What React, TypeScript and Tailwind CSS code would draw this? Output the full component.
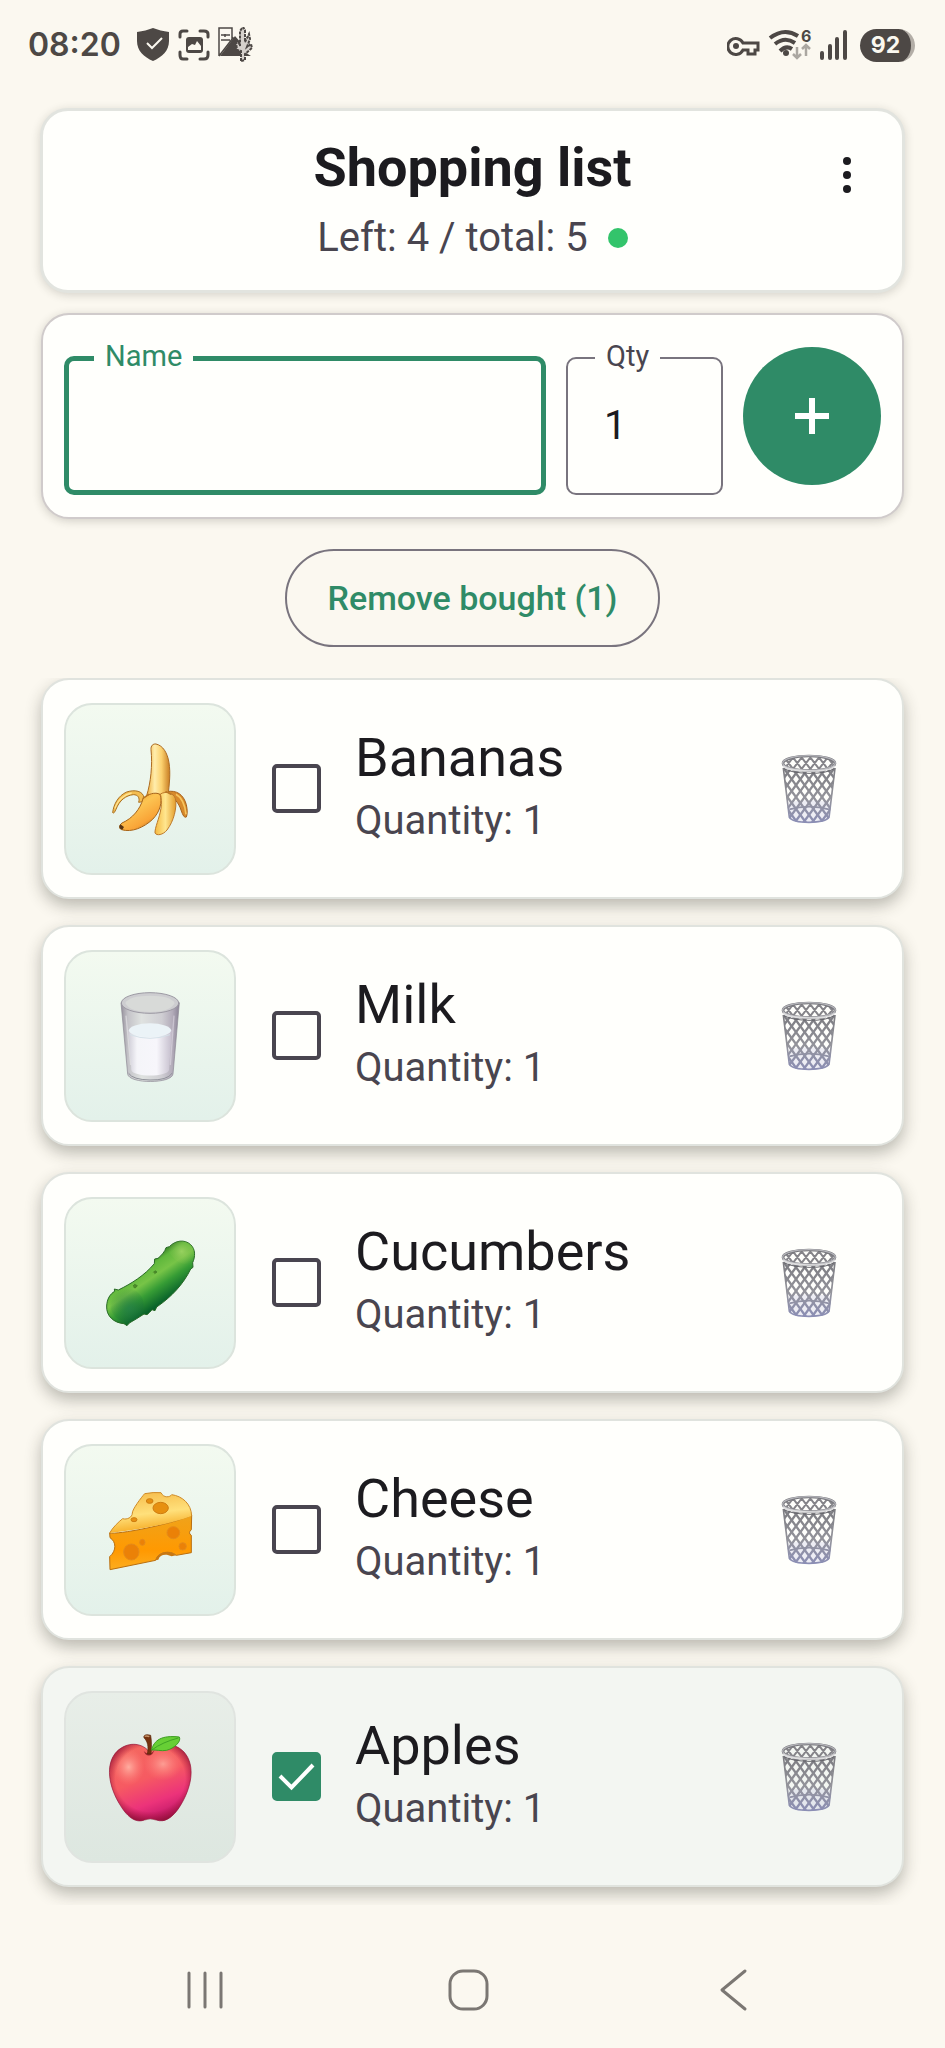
import { useId, useState } from "react";
import type { ReactNode } from "react";

type Item = { id: string; name: string; quantity: number; bought: boolean; icon: ReactNode };

function Banana() {
  return (
    <svg viewBox="242 294 300 300" className="size-[100px]" aria-hidden="true">
      <defs>
        <linearGradient id="bananaTop" x1="0" x2="1">
          <stop offset="0" stopColor="#f0ae3c" />
          <stop offset=".35" stopColor="#ffedac" />
          <stop offset=".65" stopColor="#fbd06d" />
          <stop offset="1" stopColor="#c87d23" />
        </linearGradient>
        <linearGradient id="bananaLeft" x1="0" y1="0" x2=".7" y2="1">
          <stop offset="0" stopColor="#e49427" />
          <stop offset=".45" stopColor="#fcc452" />
          <stop offset=".8" stopColor="#f9a437" />
          <stop offset="1" stopColor="#b76d1c" />
        </linearGradient>
        <linearGradient id="bananaRight" x1="0" x2="1">
          <stop offset="0" stopColor="#f5b93f" />
          <stop offset=".5" stopColor="#ffe68f" />
          <stop offset="1" stopColor="#e39c2b" />
        </linearGradient>
      </defs>
      <path d="M442 452C472 446 493 461 501 491C505 508 504 521 501 528C495 531 491 524 485 507C478 485 464 470 450 466Z" fill="#d7892a" stroke="#a8621a" strokeWidth="3" />
      <path d="M470 460C488 470 497 494 500 520" stroke="#f8c55f" strokeWidth="5" fill="none" />
      <path d="M382 464C394 425 400 373 395 326C394 314 401 308 410 309C431 314 444 335 449 365C454 397 450 430 446 464Z" fill="url(#bananaTop)" stroke="#ad6c22" strokeWidth="3" />
      <path d="M374 470C371 450 347 445 322 453C297 464 283 489 280 515C282 519 286 514 290 505C300 478 320 463 342 461C356 461 362 470 358 484L371 482Z" fill="#f4bd51" stroke="#a97123" strokeWidth="3" />
      <path d="M287 502C295 476 316 460 337 456" fill="none" stroke="#ffe493" strokeWidth="4" />
      <path d="M371 473C386 459 407 452 422 460C430 483 422 512 400 535C373 560 337 575 307 566C298 563 299 553 308 546C340 532 363 504 371 473Z" fill="url(#bananaLeft)" stroke="#a66318" strokeWidth="3" />
      <path d="M423 459C441 449 462 456 468 472C474 500 463 541 443 567C431 582 412 585 407 576C406 560 420 533 425 502C427 486 427 471 423 459Z" fill="url(#bananaRight)" stroke="#bd792a" strokeWidth="3" />
      <path d="M303 550l11 8-5 8c-9-1-11-9-6-16Z" fill="#593513" />
      <path d="M371 472l17-12M440 452l15 8" stroke="#b97623" strokeWidth="4" strokeLinecap="round" />
    </svg>
  );
}

function Milk() {
  return (
    <svg viewBox="242 256 300 300" className="size-[100px]" aria-hidden="true">
      <defs>
        <linearGradient id="glass" x1="0" x2="1">
          <stop offset="0" stopColor="#96919c" />
          <stop offset=".12" stopColor="#c4c3c8" />
          <stop offset=".35" stopColor="#dfe2e0" />
          <stop offset=".7" stopColor="#cfced3" />
          <stop offset=".88" stopColor="#b3acba" />
          <stop offset="1" stopColor="#8b8496" />
        </linearGradient>
        <linearGradient id="milkFill" x1="0" x2="1">
          <stop offset="0" stopColor="#d0ced8" />
          <stop offset=".2" stopColor="#f5f5f9" />
          <stop offset=".65" stopColor="#f7f6fb" />
          <stop offset="1" stopColor="#c4bdcc" />
        </linearGradient>
      </defs>
      <path d="M305 306L325 520C328 550 458 550 461 520L480 306Z" fill="url(#glass)" stroke="#8b8793" strokeWidth="2" />
      <path d="M327 388C345 377 440 377 458 388L449 508C445 530 340 530 336 508Z" fill="url(#milkFill)" />
      <ellipse cx="392" cy="389" rx="63" ry="21" fill="#ebf3f7" />
      <path d="M332 402Q392 424 452 402" fill="none" stroke="#d5e2e9" strokeWidth="3" />
      <ellipse cx="392" cy="307" rx="86" ry="31" fill="#cdcdd0" stroke="#9c99a3" strokeWidth="3" />
      <path d="M318 307Q330 285 392 285T466 307Q453 334 392 334T318 307Z" fill="#d8dad8" />
      <path d="M328 518Q340 537 392 538T458 518" fill="none" stroke="#8f9199" strokeWidth="3" />
      <path d="M320 345L334 493" stroke="#e8e7ea" strokeWidth="4" opacity=".6" />
      <path d="M464 345L453 493" stroke="#e6e1eb" strokeWidth="4" opacity=".5" />
    </svg>
  );
}

function Cucumber() {
  return (
    <svg viewBox="242 249 300 300" className="size-[100px]" aria-hidden="true">
      <defs>
        <linearGradient id="cucumberBody" gradientUnits="userSpaceOnUse" x1="345" y1="355" x2="420" y2="465">
          <stop offset="0" stopColor="#377d26" />
          <stop offset=".16" stopColor="#60b83c" />
          <stop offset=".4" stopColor="#77c447" />
          <stop offset=".65" stopColor="#369c35" />
          <stop offset="1" stopColor="#07602a" />
        </linearGradient>
        <radialGradient id="cucumberTip" gradientUnits="userSpaceOnUse" cx="487" cy="304" r="42">
          <stop offset="0" stopColor="#a0d565" stopOpacity=".85" />
          <stop offset="1" stopColor="#82be4d" stopOpacity="0" />
        </radialGradient>
        <radialGradient id="cucumberBase" gradientUnits="userSpaceOnUse" cx="330" cy="475" r="62">
          <stop offset="0" stopColor="#227b4b" stopOpacity=".7" />
          <stop offset="1" stopColor="#126438" stopOpacity="0" />
        </radialGradient>
      </defs>
      <path d="M440 293L450 290C468 271 496 267 514 284C529 298 528 320 520 338L521 352L514 357C492 403 456 441 412 471L407 482L398 479L391 487L383 494L374 492C359 502 344 511 330 519L323 527L314 521C284 519 260 498 262 468C263 447 272 432 286 424L285 417L297 420C336 401 376 376 405 341L406 327L416 325C428 315 437 304 440 293Z" fill="url(#cucumberBody)" stroke="#286a26" strokeWidth="3" strokeLinejoin="round" />
      <path d="M440 293L450 290C468 271 496 267 514 284C529 298 528 320 520 338C496 350 468 340 440 293Z" fill="url(#cucumberTip)" />
      <circle cx="323" cy="465" r="50" fill="url(#cucumberBase)" />
      <path d="M341 408l5-5 8 4-6 7-5-2M402 367l5-5 6 4-7 5" fill="#4e8b29" stroke="#397823" strokeWidth="2" />
    </svg>
  );
}

function Cheese() {
  return (
    <svg viewBox="242 240 300 300" className="size-[100px]" aria-hidden="true">
      <defs>
        <linearGradient id="cheeseTop" x1="0" y1="0" x2=".25" y2="1">
          <stop offset="0" stopColor="#f5b744" />
          <stop offset=".6" stopColor="#ffe07b" />
          <stop offset="1" stopColor="#f6ac24" />
        </linearGradient>
        <linearGradient id="cheeseSide" x1="0" y1="0" x2="0" y2="1">
          <stop offset="0" stopColor="#efa31b" />
          <stop offset=".65" stopColor="#ff9901" />
          <stop offset="1" stopColor="#fcad20" />
        </linearGradient>
      </defs>
      <path d="M271 399C295 404 448 375 517 346L516 389Q505 399 516 406L516 458L471 466C451 449 415 456 409 481L272 509L271 470C292 452 291 425 272 413Z" fill="url(#cheeseSide)" stroke="#b96f10" strokeWidth="3" strokeLinejoin="round" />
      <path d="M271 399C279 384 297 366 310 356C323 360 339 352 339 339C339 328 366 292 376 281Q402 276 425 278C433 295 452 292 457 284C488 288 516 311 517 348C447 374 355 389 271 399Z" fill="url(#cheeseTop)" />
      <path d="M271 399C279 384 297 366 310 356C323 360 339 352 339 339C339 328 366 292 376 281Q402 276 425 278C433 295 452 292 457 284C488 288 516 311 517 348" fill="none" stroke="#cf8a26" strokeWidth="3" strokeLinejoin="round" />
      <g fill="#e79010" stroke="#cf7d10" strokeWidth="3">
        <ellipse cx="424" cy="324" rx="23" ry="17" />
        <ellipse cx="391" cy="303" rx="10" ry="7" />
        <ellipse cx="344" cy="359" rx="9" ry="6" />
      </g>
      <g fill="#eb8107" stroke="#e58b1a" strokeWidth="3">
        <ellipse cx="336" cy="456" rx="23" ry="24" />
        <ellipse cx="462" cy="398" rx="19" ry="18" />
        <ellipse cx="490" cy="439" rx="11" ry="11" />
        <ellipse cx="369" cy="427" rx="8" ry="9" />
      </g>
      <path d="M408 481C415 454 451 448 471 466L457 469C439 460 421 464 417 479Z" fill="#c87711" />
    </svg>
  );
}

function Apple() {
  return (
    <svg viewBox="242 234 300 300" className="size-[100px]" aria-hidden="true">
      <defs>
        <linearGradient id="appleSkin" x1=".25" y1="0" x2=".65" y2="1">
          <stop offset="0" stopColor="#f4695f" />
          <stop offset=".45" stopColor="#f65a62" />
          <stop offset=".75" stopColor="#ec337a" />
          <stop offset="1" stopColor="#bb1467" />
        </linearGradient>
        <radialGradient id="appleShine">
          <stop offset="0" stopColor="#ffada0" />
          <stop offset="1" stopColor="#ff8078" stopOpacity="0" />
        </radialGradient>
        <radialGradient id="appleShade" cx=".5" cy=".45" r=".56">
          <stop offset=".76" stopColor="#a8123b" stopOpacity="0" />
          <stop offset="1" stopColor="#8f1036" stopOpacity=".85" />
        </radialGradient>
      </defs>
      <path d="M388 306C365 280 323 278 293 307C256 345 268 414 303 469C327 509 352 522 375 513Q392 506 411 513C436 522 461 506 483 470C515 418 531 351 494 309C464 278 420 281 388 306Z" fill="url(#appleSkin)" />
      <ellipse cx="328" cy="354" rx="48" ry="55" fill="url(#appleShine)" />
      <ellipse cx="431" cy="345" rx="58" ry="50" fill="url(#appleShine)" opacity=".8" />
      <path d="M388 306C365 280 323 278 293 307C256 345 268 414 303 469C327 509 352 522 375 513Q392 506 411 513C436 522 461 506 483 470C515 418 531 351 494 309C464 278 420 281 388 306Z" fill="url(#appleShade)" stroke="#941b3d" strokeWidth="2" />
      <path d="M373 306Q389 323 406 304L399 315Q388 324 378 315Z" fill="#98252d" />
      <path d="M384 315C388 293 386 279 374 266C371 259 380 254 394 259C397 276 397 297 395 315Z" fill="#75320f" stroke="#592609" strokeWidth="2" />
      <path d="M376 260Q382 257 391 261L389 265Q382 262 376 264Z" fill="#c7956b" />
      <path d="M396 303C405 274 425 258 480 264C487 278 464 298 442 304C425 307 411 302 396 303Z" fill="#67cf35" stroke="#3c9d21" strokeWidth="3" />
      <path d="M397 303Q430 279 477 267" fill="none" stroke="#369b20" strokeWidth="2.5" />
    </svg>
  );
}

function Basket() {
  const id = useId();
  return (
    <svg viewBox="223 265 210 240" className="h-[80px] w-[70px]" aria-hidden="true">
      <defs>
        <linearGradient id={`${id}s`} gradientUnits="userSpaceOnUse" x1="0" y1="320" x2="0" y2="488">
          <stop offset="0" stopColor="#7b7b80" />
          <stop offset=".55" stopColor="#94949b" />
          <stop offset="1" stopColor="#8b8eb5" />
        </linearGradient>
        <clipPath id={`${id}b`}>
          <path d="M250 322Q328 342 407 322L389 470Q380 486 328 486T268 470Z" />
        </clipPath>
        <clipPath id={`${id}r`}>
          <ellipse cx="328" cy="307" rx="74" ry="20" />
        </clipPath>
      </defs>
      <path d="M268 425Q328 412 391 425L388 470Q370 486 328 486T269 470Z" fill="#c3c5e2" opacity=".3" />
      <g clipPath={`url(#${id}b)`} fill="none" stroke={`url(#${id}s)`} strokeWidth="7">
        <path d="M146 320L270 490M172 320L296 490M198 320L322 490M224 320L348 490M250 320L374 490M276 320L400 490M302 320L426 490M328 320L452 490M354 320L478 490M380 320L504 490" />
        <path d="M276 320L152 490M302 320L178 490M328 320L204 490M354 320L230 490M380 320L256 490M406 320L282 490M432 320L308 490M458 320L334 490M484 320L360 490M510 320L386 490" />
        <path d="M269 446Q328 430 388 446" strokeWidth="5" />
      </g>
      <path d="M251 322L269 470Q278 485 328 485T388 470L406 322" fill="none" stroke={`url(#${id}s)`} strokeWidth="5" />
      <g clipPath={`url(#${id}r)`} stroke="#858489" strokeWidth="6" fill="none">
        <path d="M250 285l34 45M276 285l34 45M302 285l34 45M328 285l34 45M354 285l34 45M380 285l34 45M284 285l-34 45M310 285l-34 45M336 285l-34 45M362 285l-34 45M388 285l-34 45M414 285l-34 45" />
      </g>
      <ellipse cx="328" cy="308" rx="78" ry="22" fill="none" stroke="#77777c" strokeWidth="8" />
      <ellipse cx="328" cy="307" rx="79" ry="22" fill="none" stroke="#b5b5ba" strokeWidth="4" />
      <path d="M250 316Q266 330 328 331T406 316" fill="none" stroke="#dededf" strokeWidth="5" />
      <path d="M253 324Q276 337 328 338T403 324" fill="none" stroke="#65656b" strokeWidth="3" />
    </svg>
  );
}

function StatusBar() {
  return (
    <div className="flex h-[90px] items-center justify-between pr-[30px] pl-[28px] text-[#4d4845]">
      <div className="flex items-center">
        <time className="w-[108px] font-[Inter,sans-serif] text-[32px] leading-[40px] font-semibold">08:20</time>
        <svg viewBox="0 0 118 36" className="h-[36px] w-[118px]" aria-hidden="true">
          <path d="M17 1C22 3 27 4 33 5V14C33 24 26 30 17 34C8 30 1 24 1 14V5C7 4 12 3 17 1Z" fill="currentColor" />
          <path d="M11 16l5 5 10-10" fill="none" stroke="#fbf8f0" strokeWidth="2" />
          <g fill="none" stroke="currentColor" strokeWidth="3" strokeLinecap="round">
            <path d="M44 10V7q0-3 3-3h4M64 4h4q4 0 4 3v3M44 25v3q0 4 3 4h4M64 32h4q4 0 4-4v-3" />
          </g>
          <rect x="50" y="10" width="17" height="16" rx="3" fill="currentColor" />
          <path d="M52 23V20l4-3 3 1 2-4 4 5v4Z" fill="#fbf8f0" />
          <path d="M83 29V1h13v11M85 8h9M85 13h9M89 7v3M83 29l14-18 5 5" fill="none" stroke="currentColor" strokeWidth="1.5" />
          <path d="M84 29L99 9l8 9v6l8 5Z" fill="currentColor" />
          <path d="M105 34V24l-4-1-1-8 3 1 1 3V4l3-4 2 3v12l4-8 1 5-3 8 4-3 1 4-7 6v6Z" fill="#d6d1cc" stroke="currentColor" strokeWidth="2" strokeDasharray="3 1" />
        </svg>
      </div>
      <div className="flex items-center">
        <svg viewBox="0 0 122 36" className="h-[36px] w-[122px]" aria-hidden="true">
          <path d="M16 16h15v7h-3v4h-7v-4h-5a8 8 0 1 1 0-7Z" fill="none" stroke="currentColor" strokeWidth="3" />
          <circle cx="9" cy="19" r="3" fill="currentColor" />
          <g fill="none" stroke="currentColor" strokeWidth="4">
            <path d="M43 11Q57 0 71 9M48 17Q58 9 68 16M53 24Q59 18 65 22" />
          </g>
          <circle cx="59" cy="26" r="3" fill="currentColor" />
          <path d="M70 20v11M66 27l4 4 4-4M79 29V18M75 22l4-4 4 4" fill="none" stroke="#aba7a1" strokeWidth="2.5" />
          <path d="M95 26v5M103 19v12M110 12v19M118 5v26" fill="none" stroke="currentColor" strokeWidth="4" strokeLinecap="round" />
          <text x="74" y="15" fontFamily="Inter" fontSize="16" fontWeight="700" fill="currentColor">6</text>
        </svg>
        <span className="ml-[11px] flex h-[33px] w-[55px] items-center justify-center overflow-hidden rounded-full border-r-4 border-[#b3aea7] bg-[#4d4845] font-[Inter,sans-serif] text-[23px] leading-[33px] font-bold text-[#fbf8f0]">
          92
        </span>
      </div>
    </div>
  );
}

function Row({ item, onToggle, onDelete }: { item: Item; onToggle: () => void; onDelete: () => void }) {
  return (
    <li
      className={`flex h-[221px] items-center rounded-[28px] border-2 border-[#e0e3de] pl-[21px] shadow-[0_7px_16px_rgba(40,40,30,0.3)] ${item.bought ? "bg-[#f3f6f2]" : "bg-[#fffffc]"}`}
    >
      <div
        className={`grid size-[172px] shrink-0 place-items-center rounded-[28px] border-2 bg-linear-to-b ${item.bought ? "border-[#e0e4e0] from-[#e8eee8] to-[#dde7e0]" : "border-[#dce4dd] from-[#f3faf0] to-[#e3f1ea]"}`}
      >
        {item.icon}
      </div>
      <div className="ml-[36px] grid size-[49px] shrink-0">
        <input
          id={item.id}
          type="checkbox"
          checked={item.bought}
          onChange={onToggle}
          className="col-start-1 row-start-1 size-full appearance-none rounded-[5px] border-4 border-[#49454f] checked:border-[#2f8b67] checked:bg-[#2f8b67]"
        />
        {item.bought && (
          <svg viewBox="0 0 49 49" className="pointer-events-none col-start-1 row-start-1 size-full" aria-hidden="true">
            <path d="M8 24l11.500 11.500L41 13" fill="none" stroke="#fff" strokeWidth="4" />
          </svg>
        )}
      </div>
      <label htmlFor={item.id} className="ml-[34px] flex min-w-0 flex-1 flex-col">
        <span className="text-[54px] leading-[64px] text-[#1c1b1f]">{item.name}</span>
        <span className="text-[40px] leading-[62px] text-[#49454f]">Quantity: {item.quantity}</span>
      </label>
      <button type="button" aria-label={`Delete ${item.name}`} onClick={onDelete} className="mr-[58px] shrink-0">
        <Basket />
      </button>
    </li>
  );
}

const initialItems: Item[] = [
  { id: "bananas", name: "Bananas", quantity: 1, bought: false, icon: <Banana /> },
  { id: "milk", name: "Milk", quantity: 1, bought: false, icon: <Milk /> },
  { id: "cucumbers", name: "Cucumbers", quantity: 1, bought: false, icon: <Cucumber /> },
  { id: "cheese", name: "Cheese", quantity: 1, bought: false, icon: <Cheese /> },
  { id: "apples", name: "Apples", quantity: 1, bought: true, icon: <Apple /> },
];

export default function App() {
  const [items, setItems] = useState(initialItems);
  const [name, setName] = useState("");
  const [qty, setQty] = useState("1");
  const bought = items.filter((item) => item.bought).length;

  return (
    <div className="flex min-h-screen flex-col bg-[#fbf8f0] font-[Roboto,sans-serif]">
      <StatusBar />
      <main className="flex flex-col">
        <header className="mx-[40px] mt-[18px] grid grid-cols-[1fr_auto_1fr] rounded-[28px] border-[3px] border-[#e2e4df] bg-[#fffffc] pt-[26px] pb-[25px] shadow-[0_2px_10px_rgba(40,40,30,0.18)]">
          <div className="col-start-2 flex flex-col items-center">
            <h1 className="text-[54px] leading-[62px] font-bold text-[#1c1b1f]">Shopping list</h1>
            <p className="mt-[12px] flex items-center text-[40px] leading-[54px] text-[#49454f]">
              Left: {items.length - bought} / total: {items.length}
              <span className="ml-[20px] size-[20px] rounded-full bg-[#33c46b]" />
            </p>
          </div>
          <button type="button" aria-label="Menu" className="mt-[16px] mr-[43px] h-[44px] w-[24px] justify-self-end">
            <svg viewBox="0 0 24 44" className="h-[44px] w-[24px]" aria-hidden="true">
              <circle cx="12" cy="8" r="4" fill="#1c1b1f" />
              <circle cx="12" cy="22" r="4" fill="#1c1b1f" />
              <circle cx="12" cy="36" r="4" fill="#1c1b1f" />
            </svg>
          </button>
        </header>

        <form
          onSubmit={(event) => event.preventDefault()}
          className="mx-[41px] mt-[20px] flex items-start gap-[20px] rounded-[28px] border-2 border-[#d0cbcb] bg-[#fffffc] px-[21px] pt-[32px] pb-[22px] shadow-[0_2px_10px_rgba(40,40,30,0.2)]"
        >
          <fieldset className="h-[148px] min-w-0 flex-1 rounded-[10px] border-[5px] border-[#2f8b67]">
            <legend className="ml-[25px] px-[11px] pb-[4px] text-[29px] leading-[18px] text-[#2f8b67]">
              <label htmlFor="name">Name</label>
            </legend>
            <input
              id="name"
              value={name}
              onChange={(event) => setName(event.target.value)}
              className="h-[108px] w-full px-[36px] text-[40px] text-[#1c1b1f] outline-none"
            />
          </fieldset>
          <fieldset className="h-[148px] w-[157px] min-w-0 rounded-[10px] border-2 border-[#79747e]">
            <legend className="ml-[27px] px-[11px] pb-[4px] text-[29px] leading-[18px] text-[#49454f]">
              <label htmlFor="qty">Qty</label>
            </legend>
            <input
              id="qty"
              inputMode="numeric"
              value={qty}
              onChange={(event) => setQty(event.target.value)}
              className="h-[112px] w-full px-[36px] text-[40px] text-[#1c1b1f] outline-none"
            />
          </fieldset>
          <button type="submit" aria-label="Add item" className="grid size-[138px] place-items-center rounded-full bg-[#2f8b67]">
            <svg viewBox="0 0 36 36" className="size-[36px]" aria-hidden="true">
              <path d="M18 0v36M1 18h34" stroke="#fff" strokeWidth="6" />
            </svg>
          </button>
        </form>

        <button
          type="button"
          onClick={() => setItems(items.filter((item) => !item.bought))}
          className="mt-[30px] h-[98px] self-center rounded-full border-2 border-[#79747e] px-[41px] text-[34px] leading-[40px] font-medium text-[#2f8b67]"
        >
          Remove bought ({bought})
        </button>

        <ul className="mt-[31px] flex flex-col gap-[26px] overflow-hidden px-[41px] pb-[18px]">
          {items.map((item) => (
            <Row
              key={item.id}
              item={item}
              onToggle={() => setItems(items.map((it) => (it.id === item.id ? { ...it, bought: !it.bought } : it)))}
              onDelete={() => setItems(items.filter((it) => it.id !== item.id))}
            />
          ))}
        </ul>
      </main>
      <nav className="mt-auto flex h-[116px] items-center justify-between pr-[188px] pl-[181px] text-[#7b7773]">
        <button type="button" aria-label="Recent apps">
          <svg viewBox="0 0 48 48" className="size-[48px]" fill="none" stroke="currentColor" strokeWidth="3" strokeLinecap="round" aria-hidden="true">
            <path d="M8 7v34M24 7v34M40 7v34" />
          </svg>
        </button>
        <button type="button" aria-label="Home">
          <svg viewBox="0 0 48 48" className="size-[48px]" fill="none" stroke="currentColor" strokeWidth="3" aria-hidden="true">
            <rect x="5" y="5" width="37" height="38" rx="13" />
          </svg>
        </button>
        <button type="button" aria-label="Back">
          <svg viewBox="0 0 48 48" className="size-[48px]" fill="none" stroke="currentColor" strokeWidth="3" strokeLinecap="round" strokeLinejoin="round" aria-hidden="true">
            <path d="M36 5L13 24l23 19" />
          </svg>
        </button>
      </nav>
    </div>
  );
}
